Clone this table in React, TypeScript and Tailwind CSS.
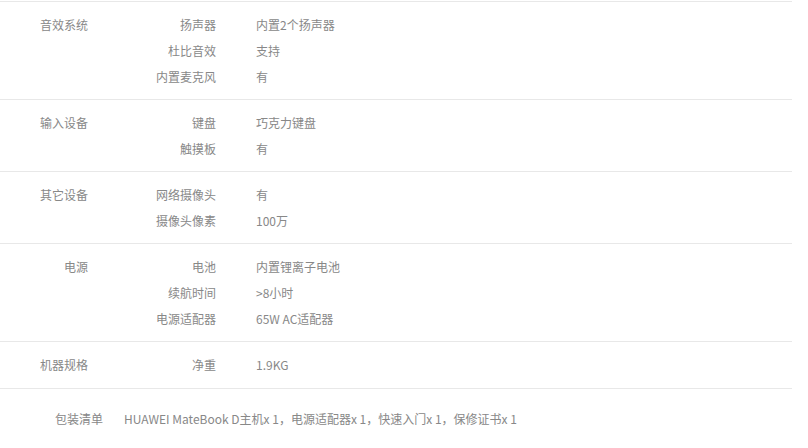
import React from "react";

interface SpecGroup {
  category: string;
  items: [string, string][];
}

const groups: SpecGroup[] = [
  {
    category: "音效系统",
    items: [
      ["扬声器", "内置2个扬声器"],
      ["杜比音效", "支持"],
      ["内置麦克风", "有"],
    ],
  },
  {
    category: "输入设备",
    items: [
      ["键盘", "巧克力键盘"],
      ["触摸板", "有"],
    ],
  },
  {
    category: "其它设备",
    items: [
      ["网络摄像头", "有"],
      ["摄像头像素", "100万"],
    ],
  },
  {
    category: "电源",
    items: [
      ["电池", "内置锂离子电池"],
      ["续航时间", ">8小时"],
      ["电源适配器", "65W AC适配器"],
    ],
  },
  {
    category: "机器规格",
    items: [["净重", "1.9KG"]],
  },
];

const font = {
  fontFamily: '"Noto Sans CJK SC", "Noto Sans", sans-serif',
};

export default function App() {
  return (
    <div className="w-[808px] h-[448px] bg-white pt-px text-[12px] text-[#888]" style={font}>
      <div className="w-[792px]">
        {groups.map((g) => (
          <div key={g.category} className="flex border-t border-[#e8e8e8] pt-[10px] pb-[9px]">
            <div className="w-[88px] shrink-0 text-right leading-[26px]">{g.category}</div>
            <div className="flex flex-col">
              {g.items.map(([label, value]) => (
                <div key={label} className="flex leading-[26px]">
                  <span className="w-[128px] text-right">{label}</span>
                  <span className="ml-[40px]">{value}</span>
                </div>
              ))}
            </div>
          </div>
        ))}
        <div className="flex border-t border-[#e8e8e8] mt-px pt-[17px] leading-[26px]">
          <span className="w-[103px] shrink-0 text-right">包装清单</span>
          <span className="ml-[21px]">
            HUAWEI MateBook D主机x 1，电源适配器x 1，快速入门x 1，保修证书x 1
          </span>
        </div>
      </div>
    </div>
  );
}
